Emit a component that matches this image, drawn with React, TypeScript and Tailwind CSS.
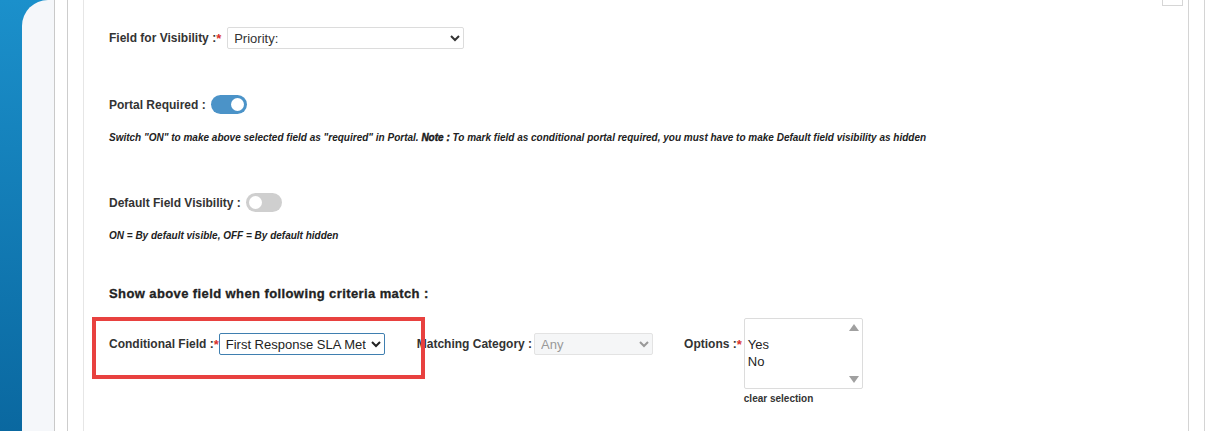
import React from "react";

const font = { fontFamily: '"Liberation Sans", Arial, sans-serif' };

function Toggle({ on }: { on: boolean }) {
  return (
    <span
      className={`relative inline-block h-[19px] w-[36px] rounded-full ${on ? "bg-[#4b93c8]" : "bg-[#cfcfcf]"}`}
    >
      <span
        className={`absolute top-[3px] h-[13px] w-[13px] rounded-full bg-white ${on ? "left-[20px]" : "left-[3px]"}`}
      />
    </span>
  );
}

function Star() {
  return <sup className="text-[#d9312b] text-[13px] relative top-[1px]">*</sup>;
}

export default function App() {
  return (
    <div className="flex h-[431px] w-[1215px] overflow-hidden bg-gradient-to-b from-[#1b90cb] to-[#0a68a0]" style={font}>
      <div className="w-[22px] shrink-0" />
      <div className="flex flex-1 rounded-tl-[26px] bg-[#f5f7fa]">
        <div className="w-[32px] shrink-0" />
        <div className="flex flex-1 border-l border-[#c9c9c9] bg-white">
          <div className="w-[12px] shrink-0" />
          <div className="flex flex-1 border-l border-[#cdcdcd]">
            <div className="w-[15px] shrink-0" />
            <div className="flex flex-1 border-l border-[#e6e6e6]">
              <div className="relative flex-1 pl-[25px] text-[#333]">
                <div className="absolute right-[5px] top-0 h-[6px] w-[21px] border border-t-0 border-[#d6d6d6]" />

                {/* Field for visibility */}
                <div className="mt-[27px] flex h-[22px] items-center">
                  <label className="text-[12px] font-bold text-[#333]">
                    Field for Visibility :<Star />
                  </label>
                  <select
                    defaultValue="Priority:"
                    className="ml-[6px] h-[22px] w-[237px] rounded-[2px] border border-[#dcdcdc] bg-white px-[2px] text-[13px] text-[#333]"
                    style={font}
                  >
                    <option>Priority:</option>
                  </select>
                </div>

                {/* Portal required */}
                <div className="mt-[46px] flex h-[19px] items-center">
                  <span className="mr-[5px] text-[12px] font-bold">Portal Required :</span>
                  <Toggle on />
                </div>
                <p className="mt-[18px] h-[12px] text-[10px] italic leading-[12px] text-[#222] font-semibold">
                  Switch "ON" to make above selected field as "required" in Portal.{" "}
                  <b className="font-black [-webkit-text-stroke:0.4px_#111]">Note :</b> To mark field as conditional portal
                  required, you must have to make Default field visibility as hidden
                </p>

                {/* Default visibility */}
                <div className="mt-[49px] flex h-[19px] items-center">
                  <span className="mr-[5px] text-[12px] font-bold">Default Field Visibility :</span>
                  <Toggle on={false} />
                </div>
                <p className="mt-[18px] h-[12px] text-[10px] italic leading-[12px] text-[#222] font-semibold">
                  ON = By default visible, OFF = By default hidden
                </p>

                {/* Criteria */}
                <h3 className="mt-[44px] h-[16px] text-[13px] font-bold leading-[16px] text-[#222] tracking-[0.4px] [-webkit-text-stroke:0.3px_#222]">
                  Show above field when following criteria match :
                </h3>

                <div className="relative mt-[16px] flex items-start">
                  <div className="mt-[15px] flex h-[22px] items-center">
                    <label className="text-[12px] font-bold">
                      Conditional Field :<Star />
                    </label>
                    <select
                      defaultValue="First Response SLA Met"
                      className="h-[22px] w-[166px] rounded-[2px] border border-[#3f7fb0] bg-white px-[2px] text-[13px] text-[#222]"
                      style={font}
                    >
                      <option>First Response SLA Met</option>
                    </select>
                  </div>

                  <div className="ml-[32px] mt-[15px] flex h-[22px] items-center">
                    <label className="text-[12px] font-bold">Matching Category :</label>
                    <select
                      defaultValue="Any"
                      className="ml-[2px] h-[22px] w-[119px] rounded-[2px] border border-[#e3e3e3] bg-[#f5f6f7] px-[2px] text-[13px] text-[#999]"
                      style={font}
                    >
                      <option>Any</option>
                    </select>
                  </div>

                  <div className="ml-[31px] mt-[15px] flex h-[22px] items-center">
                    <label className="text-[12px] font-bold">
                      Options :<Star />
                    </label>
                  </div>
                  <div className="ml-[2px] flex flex-col">
                    <div className="flex h-[71px] w-[119px] rounded-[2px] border border-[#dcdcdc] bg-white">
                      <div className="flex-1 pl-[3px] pt-[17px] text-[13px] leading-[17px] text-[#222]">
                        <div>Yes</div>
                        <div>No</div>
                      </div>
                      <div className="flex w-[15px] flex-col items-center justify-between py-[5px]">
                        <svg width="10" height="7" viewBox="0 0 10 7">
                          <path d="M0 7 L5 0 L10 7 Z" fill="#a0a0a0" />
                        </svg>
                        <svg width="10" height="7" viewBox="0 0 10 7">
                          <path d="M0 0 L5 7 L10 0 Z" fill="#a0a0a0" />
                        </svg>
                      </div>
                    </div>
                    <span className="mt-[2px] text-[10px] font-bold text-[#333]">clear selection</span>
                  </div>

                  {/* highlight annotation */}
                  <div className="pointer-events-none absolute left-[-17px] top-[-1px] h-[62px] w-[333px] border-4 border-[#e8413f]" />
                </div>
              </div>
              <div className="w-[16px] border-l border-[#d4d4d4]" />
              <div className="w-[11px] border-l border-[#d4d4d4]" />
            </div>
          </div>
        </div>
      </div>
    </div>
  );
}
